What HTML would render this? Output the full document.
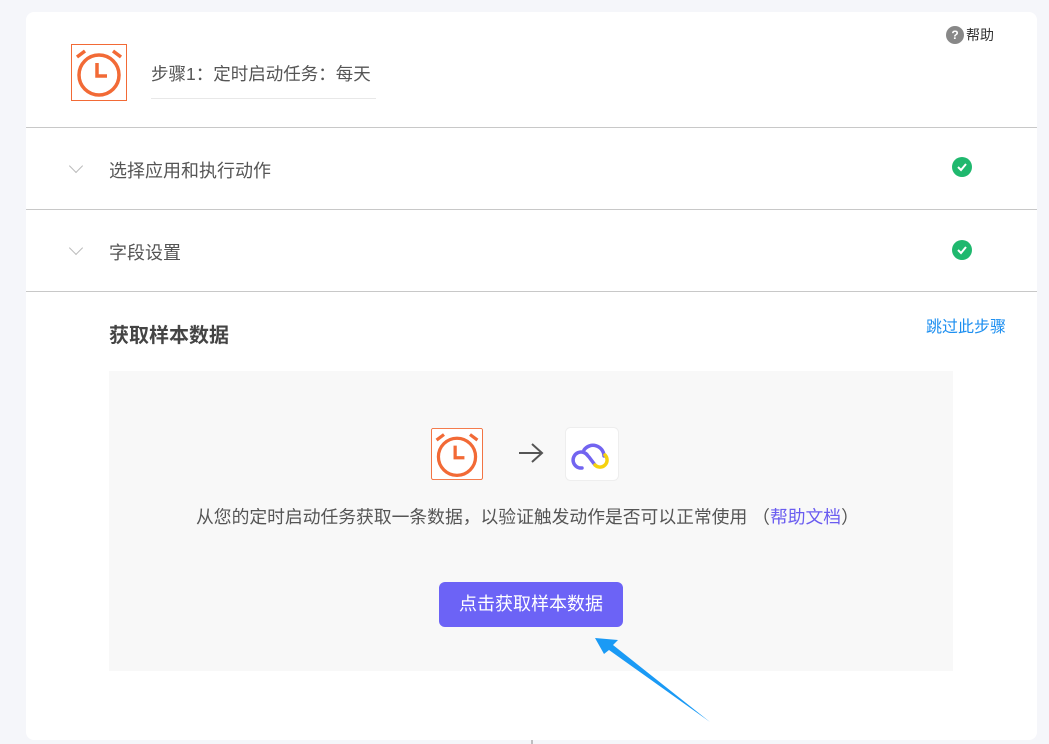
<!DOCTYPE html>
<html><head><meta charset="utf-8"><style>
body{margin:0;width:1049px;height:744px;background:#f5f6fa;font-family:"Liberation Sans","Noto Sans CJK SC",sans-serif;position:relative;overflow:hidden}
.card{position:absolute;left:26px;top:12px;width:1011px;height:728px;background:#fff;border-radius:8px}
.abs{position:absolute}
.hr{position:absolute;left:0;width:1011px;height:1px;background:#c8c8c8}
.t{font-size:18px;color:#555}
.chev{position:absolute;left:45px;width:9px;height:9px;border-right:1px solid #bbb;border-bottom:1px solid #bbb;transform:rotate(45deg)}
.ok{position:absolute;left:926px;width:20px;height:20px}
</style></head><body>
<div class="card">
 <svg class="abs" style="left:45px;top:32px" width="56" height="57" viewBox="0 0 56 57">
  <rect x="0.5" y="0.5" width="55" height="56" fill="#fff" stroke="#f26a36"/>
  <circle cx="28" cy="31" r="20" fill="none" stroke="#f26a36" stroke-width="3.5"/>
  <path d="M26 19v13h10" fill="none" stroke="#f26a36" stroke-width="3.5"/>
  <path d="M6 13l8-6M50 13l-8-6" stroke="#f26a36" stroke-width="3.5"/>
 </svg>
 <div class="abs t" style="left:125px;top:49px;font-size:17.5px">步骤1：定时启动任务：每天</div>
 <div class="abs" style="left:125px;top:86px;width:225px;height:1px;background:#e8e8e8"></div>
 <div class="abs" style="left:920px;top:13px;font-size:14px;color:#333;display:flex;align-items:center"><span style="display:inline-block;width:18px;height:18px;border-radius:50%;background:#888;color:#fff;font-size:12px;font-weight:bold;text-align:center;line-height:18px;margin-right:2px">?</span>帮助</div>
 <div class="hr" style="top:115px"></div>
 <div class="chev" style="top:149px"></div>
 <div class="abs t" style="left:83px;top:145px">选择应用和执行动作</div>
 <svg class="ok" style="top:145px" viewBox="0 0 20 20"><circle cx="10" cy="10" r="10" fill="#1fb86e"/><path d="M6 10l3 3 5-6" fill="none" stroke="#fff" stroke-width="2"/></svg>
 <div class="hr" style="top:197px"></div>
 <div class="chev" style="top:231px"></div>
 <div class="abs t" style="left:83px;top:227px">字段设置</div>
 <svg class="ok" style="top:228px" viewBox="0 0 20 20"><circle cx="10" cy="10" r="10" fill="#1fb86e"/><path d="M6 10l3 3 5-6" fill="none" stroke="#fff" stroke-width="2"/></svg>
 <div class="hr" style="top:279px"></div>
 <div class="abs" style="left:83px;top:307px;font-size:20px;font-weight:bold;color:#444">获取样本数据</div>
 <div class="abs" style="left:900px;top:301px;font-size:16px;color:#1d8ff0">跳过此步骤</div>
 <div class="abs" style="left:83px;top:359px;width:844px;height:300px;background:#f8f8f8"></div>
 <svg class="abs" style="left:405px;top:416px" width="52" height="52" viewBox="0 0 56 56">
  <rect x="0.5" y="0.5" width="55" height="55" rx="2" fill="#fff" stroke="#f26a36"/>
  <circle cx="28" cy="31" r="20" fill="none" stroke="#f26a36" stroke-width="3.5"/>
  <path d="M26 19v13h10" fill="none" stroke="#f26a36" stroke-width="3.5"/>
  <path d="M6 13l8-6M50 13l-8-6" stroke="#f26a36" stroke-width="3.5"/>
 </svg>
 <svg class="abs" style="left:491px;top:430px" width="28" height="22" viewBox="0 0 28 22"><path d="M2 11h23M15 2l10 9-10 9" fill="none" stroke="#555" stroke-width="2"/></svg>
 <svg class="abs" style="left:539px;top:415px" width="54" height="54" viewBox="0 0 54 54">
  <rect x="0.5" y="0.5" width="53" height="53" rx="5" fill="#fff" stroke="#eee"/>
  <path d="M17 41a8 8 0 1 1 6-12" fill="none" stroke="#7264f0" stroke-width="3.5" stroke-linecap="round"/>
  <path d="M19 23a11 11 0 0 1 20 6" fill="none" stroke="#7264f0" stroke-width="3.5" stroke-linecap="round"/>
  <path d="M24 30l6 8" fill="none" stroke="#7264f0" stroke-width="3.5" stroke-linecap="round"/>
  <path d="M30 38a7 7 0 1 0 10-10" fill="none" stroke="#f5d20e" stroke-width="3.5" stroke-linecap="round"/>
 </svg>
 <div class="abs" style="left:170px;top:491px;font-size:17.8px;color:#555;white-space:nowrap">从您的定时启动任务获取一条数据，以验证触发动作是否可以正常使用 （<span style="color:#6a5cf0">帮助文档</span>）</div>
 <div class="abs" style="left:413px;top:570px;width:184px;height:45px;border-radius:6px;background:#6c63f6;color:#fff;font-size:18px;text-align:center;line-height:45px">点击获取样本数据</div>
</div>
<svg class="abs" style="left:0;top:0" width="1049" height="744">
 <path d="M595 638L618 640 613 645 710 722 609 650 604 654Z" fill="#1a9af5"/>
 <line x1="532" y1="740" x2="532" y2="744" stroke="#888"/>
</svg>
</body></html>
